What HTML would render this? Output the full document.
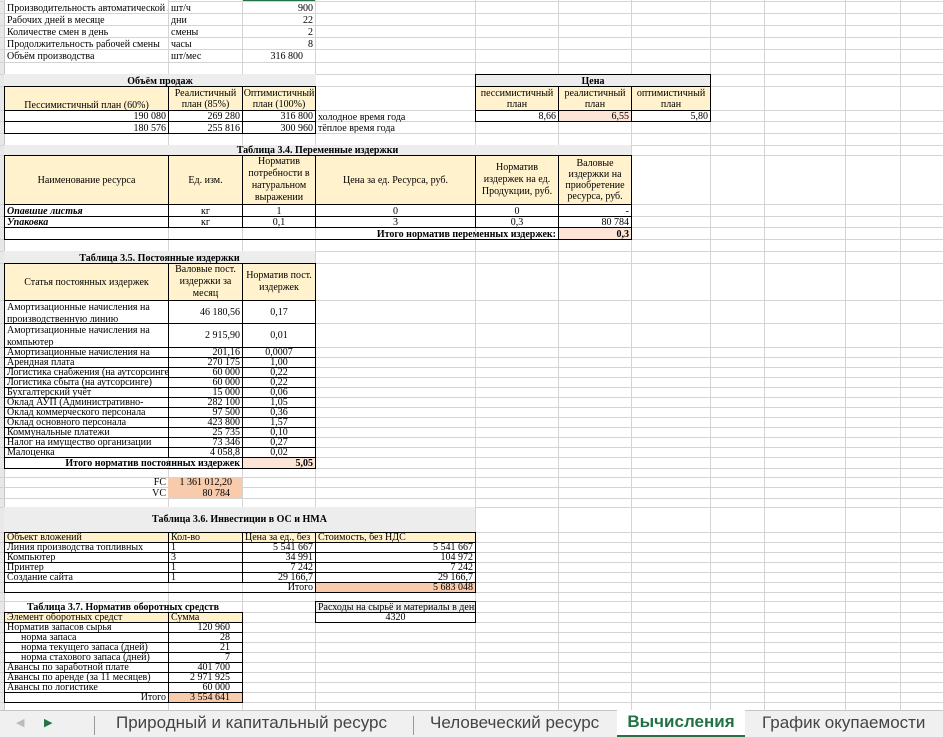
<!DOCTYPE html>
<html><head><meta charset="utf-8"><style>
body{margin:0;width:943px;height:737px;overflow:hidden;background:#fff;position:relative;font-family:"Liberation Serif",serif}
.v{position:absolute;top:0;height:710px;width:1px;background:#d4d4d4}
.h{position:absolute;left:0;width:943px;height:1px;background:#d4d4d4}
.c{position:absolute;box-sizing:border-box;font-size:10px;line-height:9px;white-space:nowrap;overflow:hidden;padding:0 2px;color:#000;display:flex;align-items:flex-end}
.b{border:1px solid #000}
.r{justify-content:flex-end}.m{justify-content:center;text-align:center}.mid{align-items:center}
.y{background:#fff2cc}.g{background:#ededed}.s{background:#f8cbad}.p{background:#fce4d6}
.bo{font-weight:bold}.w{white-space:normal}
.tabs{position:absolute;left:0;top:710px;width:943px;height:27px;background:#f0f0f0;border-top:1px solid #c6c6c6;box-sizing:border-box;font-family:"Liberation Sans",sans-serif;font-size:17px;color:#444}
.tab{position:absolute;top:0;height:26px;line-height:24px}
.sep{position:absolute;top:5px;width:1px;height:19px;background:#999}
</style></head><body>
<div style="position:absolute;left:0;top:0;width:4px;height:710px;background:#e8e8e8;border-right:1px solid #c6c6c6"></div>
<div style="position:absolute;left:242px;top:0;width:73px;height:2px;background:#217346"></div>
<div class="v" style="left:168px"></div><div class="v" style="left:242px"></div><div class="v" style="left:315px"></div><div class="v" style="left:475px"></div><div class="v" style="left:558px"></div><div class="v" style="left:631px"></div><div class="v" style="left:710px"></div><div class="v" style="left:764px"></div><div class="v" style="left:845px"></div><div class="v" style="left:900px"></div>
<div class="h" style="top:1px"></div><div class="h" style="top:13px"></div><div class="h" style="top:25px"></div><div class="h" style="top:37px"></div><div class="h" style="top:49px"></div><div class="h" style="top:62px"></div><div class="h" style="top:74px"></div><div class="h" style="top:86px"></div><div class="h" style="top:110px"></div><div class="h" style="top:121px"></div><div class="h" style="top:133px"></div><div class="h" style="top:145px"></div><div class="h" style="top:155px"></div><div class="h" style="top:204px"></div><div class="h" style="top:216px"></div><div class="h" style="top:227px"></div><div class="h" style="top:239px"></div><div class="h" style="top:251px"></div><div class="h" style="top:263px"></div><div class="h" style="top:300px"></div><div class="h" style="top:323px"></div><div class="h" style="top:347px"></div><div class="h" style="top:357px"></div><div class="h" style="top:367px"></div><div class="h" style="top:377px"></div><div class="h" style="top:387px"></div><div class="h" style="top:397px"></div><div class="h" style="top:407px"></div><div class="h" style="top:417px"></div><div class="h" style="top:427px"></div><div class="h" style="top:437px"></div><div class="h" style="top:447px"></div><div class="h" style="top:457px"></div><div class="h" style="top:468px"></div><div class="h" style="top:477px"></div><div class="h" style="top:487px"></div><div class="h" style="top:498px"></div><div class="h" style="top:507px"></div><div class="h" style="top:532px"></div><div class="h" style="top:542px"></div><div class="h" style="top:552px"></div><div class="h" style="top:562px"></div><div class="h" style="top:572px"></div><div class="h" style="top:582px"></div><div class="h" style="top:592px"></div><div class="h" style="top:601px"></div><div class="h" style="top:612px"></div><div class="h" style="top:622px"></div><div class="h" style="top:632px"></div><div class="h" style="top:642px"></div><div class="h" style="top:652px"></div><div class="h" style="top:662px"></div><div class="h" style="top:672px"></div><div class="h" style="top:682px"></div><div class="h" style="top:692px"></div><div class="h" style="top:702px"></div>

<div class="c" style="left:5px;top:1px;width:163px;height:12px;background:#fff">Производительность автоматической лин</div>
<div class="c" style="left:169px;top:1px;width:73px;height:12px">шт/ч</div>
<div class="c r" style="left:243px;top:1px;width:72px;height:12px">900</div>
<div class="c" style="left:5px;top:13px;width:163px;height:12px">Рабочих дней в месяце</div>
<div class="c" style="left:169px;top:13px;width:73px;height:12px">дни</div>
<div class="c r" style="left:243px;top:13px;width:72px;height:12px">22</div>
<div class="c" style="left:5px;top:25px;width:163px;height:12px">Количестве смен в день</div>
<div class="c" style="left:169px;top:25px;width:73px;height:12px">смены</div>
<div class="c r" style="left:243px;top:25px;width:72px;height:12px">2</div>
<div class="c" style="left:5px;top:37px;width:163px;height:12px">Продолжительность рабочей смены</div>
<div class="c" style="left:169px;top:37px;width:73px;height:12px">часы</div>
<div class="c r" style="left:243px;top:37px;width:72px;height:12px">8</div>
<div class="c" style="left:5px;top:49px;width:163px;height:12px">Объём производства</div>
<div class="c" style="left:169px;top:49px;width:73px;height:12px">шт/мес</div>
<div class="c r" style="left:243px;top:49px;width:62px;height:12px">316 800</div>

<div class="c g bo m" style="left:4px;top:74px;width:312px;height:12px">Объём продаж</div>
<div class="c y b m" style="left:4px;top:86px;width:165px;height:25px">Пессимистичный план (60%)</div>
<div class="c y b m w" style="left:168px;top:86px;width:75px;height:25px;line-height:11px">Реалистичный план (85%)</div>
<div class="c y b m w" style="left:242px;top:86px;width:74px;height:25px;line-height:11px">Оптимистичный план (100%)</div>
<div class="c b r" style="left:4px;top:110px;width:165px;height:12px">190 080</div>
<div class="c b r" style="left:168px;top:110px;width:75px;height:12px">269 280</div>
<div class="c b r" style="left:242px;top:110px;width:74px;height:12px">316 800</div>
<div class="c b r" style="left:4px;top:121px;width:165px;height:13px">180 576</div>
<div class="c b r" style="left:168px;top:121px;width:75px;height:13px">255 816</div>
<div class="c b r" style="left:242px;top:121px;width:74px;height:13px">300 960</div>
<div class="c" style="left:316px;top:110px;width:159px;height:12px">холодное время года</div>
<div class="c" style="left:316px;top:121px;width:159px;height:12px">тёплое время года</div>

<div class="c g bo m b" style="left:475px;top:74px;width:236px;height:13px">Цена</div>
<div class="c y b m w" style="left:475px;top:86px;width:84px;height:25px;line-height:11px">пессимистичный план</div>
<div class="c y b m w" style="left:558px;top:86px;width:74px;height:25px;line-height:11px">реалистичный план</div>
<div class="c y b m w" style="left:631px;top:86px;width:80px;height:25px;line-height:11px">оптимистичный план</div>
<div class="c b r" style="left:475px;top:110px;width:84px;height:12px">8,66</div>
<div class="c b r p" style="left:558px;top:110px;width:74px;height:12px">6,55</div>
<div class="c b r" style="left:631px;top:110px;width:80px;height:12px">5,80</div>

<div class="c g bo m" style="left:4px;top:145px;width:627px;height:10px">Таблица 3.4. Переменные издержки</div>
<div class="c y b m mid" style="left:4px;top:155px;width:165px;height:50px">Наименование ресурса</div>
<div class="c y b m mid" style="left:168px;top:155px;width:75px;height:50px">Ед. изм.</div>
<div class="c y b m mid w" style="left:242px;top:155px;width:74px;height:50px;line-height:12px">Норматив потребности в натуральном выражении</div>
<div class="c y b m mid" style="left:315px;top:155px;width:161px;height:50px">Цена за ед. Ресурса, руб.</div>
<div class="c y b m mid w" style="left:475px;top:155px;width:84px;height:50px;line-height:12px">Норматив издержек на ед. Продукции, руб.</div>
<div class="c y b m mid w" style="left:558px;top:155px;width:74px;height:50px;line-height:11px">Валовые издержки на приобретение ресурса, руб.</div>
<div class="c b bo" style="left:4px;top:204px;width:165px;height:13px;font-style:italic">Опавшие листья</div>
<div class="c b m" style="left:168px;top:204px;width:75px;height:13px">кг</div>
<div class="c b m" style="left:242px;top:204px;width:74px;height:13px">1</div>
<div class="c b m" style="left:315px;top:204px;width:161px;height:13px">0</div>
<div class="c b m" style="left:475px;top:204px;width:84px;height:13px">0</div>
<div class="c b r" style="left:558px;top:204px;width:74px;height:13px">-</div>
<div class="c b bo" style="left:4px;top:216px;width:165px;height:12px;font-style:italic">Упаковка</div>
<div class="c b m" style="left:168px;top:216px;width:75px;height:12px">кг</div>
<div class="c b m" style="left:242px;top:216px;width:74px;height:12px">0,1</div>
<div class="c b m" style="left:315px;top:216px;width:161px;height:12px">3</div>
<div class="c b m" style="left:475px;top:216px;width:84px;height:12px">0,3</div>
<div class="c b r" style="left:558px;top:216px;width:74px;height:12px">80 784</div>
<div class="c b bo r" style="left:4px;top:227px;width:555px;height:13px">Итого норматив переменных издержек:</div>
<div class="c b bo r p" style="left:558px;top:227px;width:74px;height:13px">0,3</div>

<div class="c g bo m" style="left:4px;top:251px;width:311px;height:12px">Таблица 3.5. Постоянные издержки</div>
<div class="c y b m mid" style="left:4px;top:263px;width:165px;height:38px">Статья постоянных издержек</div>
<div class="c y b m mid w" style="left:168px;top:263px;width:75px;height:38px;line-height:12px">Валовые пост. издержки за месяц</div>
<div class="c y b m mid w" style="left:242px;top:263px;width:74px;height:38px;line-height:12px">Норматив пост. издержек</div>
<div class="c b w" style="left:4px;top:300px;width:165px;height:24px;line-height:12px;align-items:flex-start;padding-top:1px">Амортизационные начисления на производственную линию</div>
<div class="c b r mid" style="left:168px;top:300px;width:75px;height:24px">46 180,56</div>
<div class="c b m mid" style="left:242px;top:300px;width:74px;height:24px">0,17</div>
<div class="c b w" style="left:4px;top:323px;width:165px;height:25px;line-height:12px;align-items:flex-start;padding-top:1px">Амортизационные начисления на компьютер</div>
<div class="c b r mid" style="left:168px;top:323px;width:75px;height:25px">2 915,90</div>
<div class="c b m mid" style="left:242px;top:323px;width:74px;height:25px">0,01</div>

<div class="c b" style="left:4px;top:347px;width:165px;height:11px">Амортизационные начисления на</div><div class="c b r" style="left:168px;top:347px;width:75px;height:11px">201,16</div><div class="c b m" style="left:242px;top:347px;width:74px;height:11px">0,0007</div>
<div class="c b" style="left:4px;top:357px;width:165px;height:11px">Арендная плата</div><div class="c b r" style="left:168px;top:357px;width:75px;height:11px">270 175</div><div class="c b m" style="left:242px;top:357px;width:74px;height:11px">1,00</div>
<div class="c b" style="left:4px;top:367px;width:165px;height:11px">Логистика снабжения (на аутсорсинге)</div><div class="c b r" style="left:168px;top:367px;width:75px;height:11px">60 000</div><div class="c b m" style="left:242px;top:367px;width:74px;height:11px">0,22</div>
<div class="c b" style="left:4px;top:377px;width:165px;height:11px">Логистика сбыта (на аутсорсинге)</div><div class="c b r" style="left:168px;top:377px;width:75px;height:11px">60 000</div><div class="c b m" style="left:242px;top:377px;width:74px;height:11px">0,22</div>
<div class="c b" style="left:4px;top:387px;width:165px;height:11px">Бухгалтерский учёт</div><div class="c b r" style="left:168px;top:387px;width:75px;height:11px">15 000</div><div class="c b m" style="left:242px;top:387px;width:74px;height:11px">0,06</div>
<div class="c b" style="left:4px;top:397px;width:165px;height:11px">Оклад АУП (Административно-</div><div class="c b r" style="left:168px;top:397px;width:75px;height:11px">282 100</div><div class="c b m" style="left:242px;top:397px;width:74px;height:11px">1,05</div>
<div class="c b" style="left:4px;top:407px;width:165px;height:11px">Оклад коммерческого персонала</div><div class="c b r" style="left:168px;top:407px;width:75px;height:11px">97 500</div><div class="c b m" style="left:242px;top:407px;width:74px;height:11px">0,36</div>
<div class="c b" style="left:4px;top:417px;width:165px;height:11px">Оклад основного персонала</div><div class="c b r" style="left:168px;top:417px;width:75px;height:11px">423 800</div><div class="c b m" style="left:242px;top:417px;width:74px;height:11px">1,57</div>
<div class="c b" style="left:4px;top:427px;width:165px;height:11px">Коммунальные платежи</div><div class="c b r" style="left:168px;top:427px;width:75px;height:11px">25 735</div><div class="c b m" style="left:242px;top:427px;width:74px;height:11px">0,10</div>
<div class="c b" style="left:4px;top:437px;width:165px;height:11px">Налог на имущество организации</div><div class="c b r" style="left:168px;top:437px;width:75px;height:11px">73 346</div><div class="c b m" style="left:242px;top:437px;width:74px;height:11px">0,27</div>
<div class="c b" style="left:4px;top:447px;width:165px;height:11px">Малоценка</div><div class="c b r" style="left:168px;top:447px;width:75px;height:11px">4 058,8</div><div class="c b m" style="left:242px;top:447px;width:74px;height:11px">0,02</div>
<div class="c b bo r" style="left:4px;top:457px;width:239px;height:12px">Итого норматив постоянных издержек</div>
<div class="c b bo r p" style="left:242px;top:457px;width:74px;height:12px">5,05</div>
<div class="c r" style="left:4px;top:477px;width:164px;height:10px">FC</div>
<div class="c s r" style="left:168px;top:477px;width:74px;height:10px;padding-right:10px">1 361 012,20</div>
<div class="c r" style="left:4px;top:487px;width:164px;height:11px">VC</div>
<div class="c s r" style="left:168px;top:487px;width:74px;height:11px;padding-right:12px">80 784</div>

<div class="c g bo m mid" style="left:4px;top:507px;width:471px;height:25px">Таблица 3.6. Инвестиции в ОС и НМА</div>
<div class="c y b" style="left:4px;top:532px;width:165px;height:11px">Объект вложений</div>
<div class="c y b" style="left:168px;top:532px;width:75px;height:11px">Кол-во</div>
<div class="c y b" style="left:242px;top:532px;width:74px;height:11px">Цена за ед., без</div>
<div class="c y b" style="left:315px;top:532px;width:161px;height:11px">Стоимость, без НДС</div>
<div class="c b" style="left:4px;top:542px;width:165px;height:11px">Линия производства топливных</div><div class="c b" style="left:168px;top:542px;width:75px;height:11px">1</div><div class="c b r" style="left:242px;top:542px;width:74px;height:11px">5 541 667</div><div class="c b r" style="left:315px;top:542px;width:161px;height:11px">5 541 667</div>
<div class="c b" style="left:4px;top:552px;width:165px;height:11px">Компьютер</div><div class="c b" style="left:168px;top:552px;width:75px;height:11px">3</div><div class="c b r" style="left:242px;top:552px;width:74px;height:11px">34 991</div><div class="c b r" style="left:315px;top:552px;width:161px;height:11px">104 972</div>
<div class="c b" style="left:4px;top:562px;width:165px;height:11px">Принтер</div><div class="c b" style="left:168px;top:562px;width:75px;height:11px">1</div><div class="c b r" style="left:242px;top:562px;width:74px;height:11px">7 242</div><div class="c b r" style="left:315px;top:562px;width:161px;height:11px">7 242</div>
<div class="c b" style="left:4px;top:572px;width:165px;height:11px">Создание сайта</div><div class="c b" style="left:168px;top:572px;width:75px;height:11px">1</div><div class="c b r" style="left:242px;top:572px;width:74px;height:11px">29 166,7</div><div class="c b r" style="left:315px;top:572px;width:161px;height:11px">29 166,7</div>
<div class="c b r" style="left:4px;top:582px;width:312px;height:11px">Итого</div>
<div class="c b r s" style="left:315px;top:582px;width:161px;height:11px">5 683 048</div>

<div class="c bo m" style="left:4px;top:601px;width:238px;height:11px">Таблица 3.7. Норматив оборотных средств</div>
<div class="c y b" style="left:4px;top:612px;width:165px;height:11px">Элемент оборотных средст</div>
<div class="c y b" style="left:168px;top:612px;width:75px;height:11px">Сумма</div>
<div class="c b" style="left:4px;top:622px;width:165px;height:11px">Норматив запасов сырья</div><div class="c b r" style="left:168px;top:622px;width:75px;height:11px;padding-right:12px">120 960</div>
<div class="c b" style="left:4px;top:632px;width:165px;height:11px;padding-left:16px">норма запаса</div><div class="c b r" style="left:168px;top:632px;width:75px;height:11px;padding-right:12px">28</div>
<div class="c b" style="left:4px;top:642px;width:165px;height:11px;padding-left:16px">норма текущего запаса (дней)</div><div class="c b r" style="left:168px;top:642px;width:75px;height:11px;padding-right:12px">21</div>
<div class="c b" style="left:4px;top:652px;width:165px;height:11px;padding-left:16px">норма стахового запаса (дней)</div><div class="c b r" style="left:168px;top:652px;width:75px;height:11px;padding-right:12px">7</div>
<div class="c b" style="left:4px;top:662px;width:165px;height:11px">Авансы по заработной плате</div><div class="c b r" style="left:168px;top:662px;width:75px;height:11px;padding-right:12px">401 700</div>
<div class="c b" style="left:4px;top:672px;width:165px;height:11px">Авансы по аренде (за 11 месяцев)</div><div class="c b r" style="left:168px;top:672px;width:75px;height:11px;padding-right:12px">2 971 925</div>
<div class="c b" style="left:4px;top:682px;width:165px;height:11px">Авансы по логистике</div><div class="c b r" style="left:168px;top:682px;width:75px;height:11px;padding-right:12px">60 000</div>
<div class="c b r" style="left:4px;top:692px;width:165px;height:11px">Итого</div><div class="c b r s" style="left:168px;top:692px;width:75px;height:11px;padding-right:12px">3 554 641</div>

<div class="c b g" style="left:315px;top:601px;width:161px;height:12px">Расходы на сырьё и материалы в день</div>
<div class="c b m" style="left:315px;top:612px;width:161px;height:11px">4320</div>

<div class="tabs">
<div class="tab" style="left:16px;color:#bbb;font-size:11px">◀</div>
<div class="tab" style="left:44px;color:#217346;font-size:11px">▶</div>
<div class="sep" style="left:94px"></div>
<div class="tab" style="left:116px">Природный и капитальный ресурс</div>
<div class="sep" style="left:413px"></div>
<div class="tab" style="left:430px">Человеческий ресурс</div>
<div class="tab" style="left:617px;width:128px;top:-1px;height:27px;background:#fff;border-bottom:2px solid #217346;box-sizing:border-box;text-align:center;color:#217346;font-weight:bold">Вычисления</div>
<div class="tab" style="left:762px">График окупаемости</div>
</div>
</body></html>
